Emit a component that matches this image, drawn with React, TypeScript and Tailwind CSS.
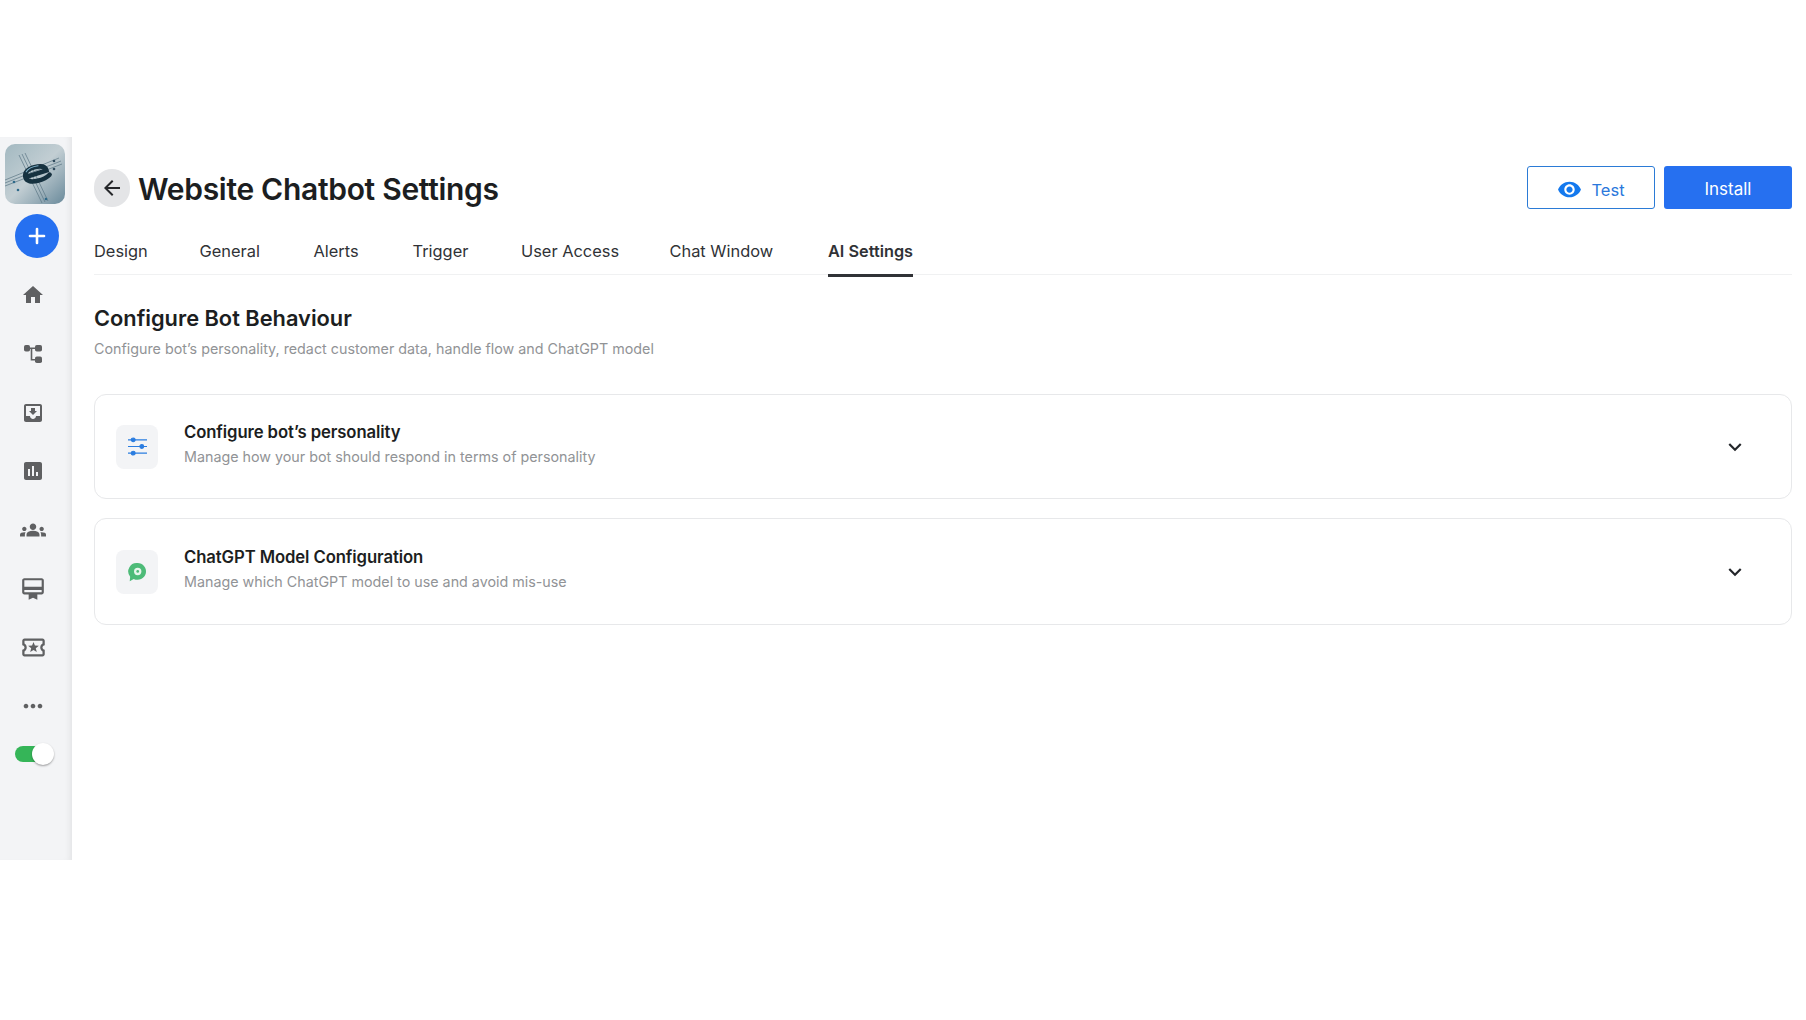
import React from 'react'
import {
  MdArrowBack,
  MdAssessment,
  MdCardMembership,
  MdGroups,
  MdHome,
  MdKeyboardArrowDown,
  MdMoreHoriz,
  MdMoveToInbox,
  MdOutlineLocalActivity,
  MdVisibility,
} from 'react-icons/md'
import { Plus } from 'lucide-react'

const tabs = [
  { label: 'Design', width: 'w-[52.5px]' },
  { label: 'General', width: 'w-[61px]' },
  { label: 'Alerts', width: 'w-[46px]' },
  { label: 'Trigger', width: 'w-[55.5px]' },
  { label: 'User Access', width: 'w-[95.5px]' },
  { label: 'Chat Window', width: 'w-[105.5px]' },
]

function Logo() {
  return (
    <svg viewBox="0 0 60 60" className="w-[60px] h-[60px] rounded-[10px]">
      <defs>
        <linearGradient id="logoBg" x1="0" y1="0" x2="1" y2="1">
          <stop offset="0" stopColor="#a3b9c1" />
          <stop offset="0.5" stopColor="#c2ced3" />
          <stop offset="1" stopColor="#6a8a9b" />
        </linearGradient>
        <filter id="soft">
          <feGaussianBlur stdDeviation="0.4" />
        </filter>
      </defs>
      <rect width="60" height="60" fill="url(#logoBg)" />
      <g filter="url(#soft)">
        <g stroke="#5a7584" strokeWidth="0.7" fill="none">
          <path d="M17 10 L40 58 M20 9 L43 57 M14 11 L37 59" />
          <path d="M0 39 L56 17 M0 42 L57 20 M0 36 L54 14" />
        </g>
        <circle cx="49" cy="17" r="1.3" fill="#2d4a5c" />
        <circle cx="49" cy="25" r="1.3" fill="#2d4a5c" />
        <circle cx="9" cy="38" r="1.3" fill="#2f6a8a" />
        <circle cx="13" cy="46" r="1.3" fill="#2f6a8a" />
        <circle cx="41" cy="55" r="1.3" fill="#2f6a8a" />
        <g transform="rotate(-14 31 30)" fill="none" strokeLinecap="round">
          <path d="M21 30.5 L42 29 C42 24 37 23 31 23 C24 23 20 26 20 30.5 C20 35 25 37 31 37 C36 37 40 36.5 44 34" stroke="#15303f" strokeWidth="4.6" />
          <path d="M22 25.5 C25 22.5 30 22 35 22.5" stroke="#7fb0c8" strokeWidth="1.1" />
        </g>
      </g>
    </svg>
  )
}

function FlowIcon() {
  return (
    <svg viewBox="0 0 18 18" className="w-[18px] h-[18px]" fill="currentColor">
      <rect x="0" y="0" width="6" height="6.5" rx="1.8" />
      <rect x="11" y="0" width="7" height="6.5" rx="1.8" />
      <rect x="11" y="11.5" width="7" height="6.5" rx="1.8" />
      <path d="M5 3.2H12M7.5 3.2V14.8H12" fill="none" stroke="currentColor" strokeWidth="1.6" />
    </svg>
  )
}

function NavIcon({ children }: { children: React.ReactNode }) {
  return <div className="w-[66px] h-[58.7px] flex items-center justify-center text-[#5f6062]">{children}</div>
}

function Sidebar() {
  return (
    <aside className="w-[72px] shrink-0 bg-[#f3f4f6] shadow-[inset_-6px_0_6px_-4px_rgba(0,0,0,0.07)] pt-[7px]">
      <div className="pl-[5px]">
        <Logo />
      </div>
      <div className="pl-[15px] mt-[10px]">
        <div className="w-[44px] h-[44px] rounded-full bg-[#2670f0] flex items-center justify-center">
          <Plus className="w-[24px] h-[24px] text-white" strokeWidth={2.6} />
        </div>
      </div>
      <div className="mt-[8px]">
        <NavIcon><MdHome size={24} /></NavIcon>
        <NavIcon><FlowIcon /></NavIcon>
        <NavIcon><MdMoveToInbox size={24} /></NavIcon>
        <NavIcon><MdAssessment size={24} /></NavIcon>
        <NavIcon><MdGroups size={26} /></NavIcon>
        <NavIcon><MdCardMembership size={26} /></NavIcon>
        <NavIcon><MdOutlineLocalActivity size={27} /></NavIcon>
        <NavIcon><MdMoreHoriz size={28} /></NavIcon>
      </div>
      <div className="pl-[15px] mt-[10px]">
        <div className="relative w-[32px] h-[16px] rounded-full bg-[#35b558]">
          <span className="absolute left-[17px] top-[-3px] w-[22px] h-[22px] rounded-full bg-white shadow-[0_1px_2px_rgba(0,0,0,0.35)]" />
        </div>
      </div>
    </aside>
  )
}

function SlidersIcon() {
  return (
    <svg viewBox="0 0 22 20" className="w-[21px] h-[19px]" fill="none" stroke="#2b7de0" strokeWidth="1.2">
      <path d="M1 3h20M1 10h20M1 17h20" />
      <circle cx="6.5" cy="3" r="2" fill="#2b7de0" />
      <circle cx="15.5" cy="10" r="2" fill="#2b7de0" />
      <circle cx="6.5" cy="17" r="2" fill="#2b7de0" />
    </svg>
  )
}

function BubbleIcon() {
  return (
    <svg viewBox="0 0 18 20" className="w-[19px] h-[21px] mt-[1px]">
      <path d="M9 1a8 8 0 1 1-3.6 15.1L1.6 18.4 2 14A8 8 0 0 1 9 1z" fill="#4dbb78" />
      <circle cx="9.2" cy="9" r="3.5" fill="#e8f5ec" />
      <circle cx="9.2" cy="9" r="1.3" fill="#4dbb78" />
    </svg>
  )
}

function SettingCard({ icon, title, text, tall }: { icon: React.ReactNode; title: string; text: string; tall?: boolean }) {
  return (
    <div className={`${tall ? 'h-[107px]' : 'h-[105px]'} border border-[#e7e8ea] rounded-[12px] bg-white pl-[21px] pr-[43px] flex items-center`}>
      <div className="w-[42px] h-[44px] rounded-[8px] bg-[#f3f4f6] flex items-center justify-center">{icon}</div>
      <div className="ml-[26px] flex-1 -mt-[5px]">
        <div className="text-[16.7px] leading-[24px] font-semibold text-[#1c1e21] tracking-[-0.1px]">{title}</div>
        <div className="text-[14.3px] leading-[22px] mt-[2px] text-[#919396]">{text}</div>
      </div>
      <MdKeyboardArrowDown size={26} className="text-[#23262a]" />
    </div>
  )
}

export default function App() {
  return (
    <div className="h-[1020px] bg-white pt-[137px] font-['Inter',sans-serif]">
      <div className="h-[723px] flex">
        <Sidebar />
        <main className="flex-1 pl-[22px] pr-[14px] pt-[29px]">
          <div className="flex items-center justify-between">
            <div className="flex items-center">
              <div className="w-[36px] h-[38px] rounded-full bg-[#e4e5e7] flex items-center justify-center">
                <MdArrowBack size={24} className="text-[#26282b]" />
              </div>
              <h1 className="ml-[8px] pt-[2px] text-[30px] leading-[40px] font-semibold text-[#1c1e21] tracking-[-0.3px]">Website Chatbot Settings</h1>
            </div>
            <div className="flex gap-[9px]">
              <button className="w-[128px] h-[43px] rounded-[3px] border border-[#2b7bd6] text-[#2b78dc] text-[16.5px] flex items-center justify-center gap-[9px]">
                <MdVisibility size={25} className="text-[#1479ee] mt-[3px]" />
                <span className="pt-[6px]">Test</span>
              </button>
              <button className="w-[128px] h-[43px] rounded-[3px] bg-[#2670f0] text-white text-[17px] flex items-center justify-center pt-[4px]">
                Install
              </button>
            </div>
          </div>

          <div className="mt-[17px] h-[48.5px] border-b border-[#f0f1f2] flex gap-[53px]">
            {tabs.map((t) => (
              <div key={t.label} className={`${t.width} text-[16.4px] leading-[50px] text-[#303236] whitespace-nowrap`}>
                {t.label}
              </div>
            ))}
            <div className="h-[51px] border-b-[3px] border-[#303236] text-[16.3px] leading-[50px] font-semibold text-[#303236] whitespace-nowrap">
              AI Settings
            </div>
          </div>

          <h2 className="mt-[27.5px] text-[21.8px] leading-[32px] font-semibold text-[#1c1e21]">Configure Bot Behaviour</h2>
          <p className="mt-[3px] text-[14.3px] leading-[24px] text-[#919396]">
            Configure bot’s personality, redact customer data, handle flow and ChatGPT model
          </p>

          <div className="mt-[33px] flex flex-col gap-[19px]">
            <SettingCard
              icon={<SlidersIcon />}
              title="Configure bot’s personality"
              text="Manage how your bot should respond in terms of personality"
            />
            <SettingCard
              tall
              icon={<BubbleIcon />}
              title="ChatGPT Model Configuration"
              text="Manage which ChatGPT model to use and avoid mis-use"
            />
          </div>
        </main>
      </div>
    </div>
  )
}
